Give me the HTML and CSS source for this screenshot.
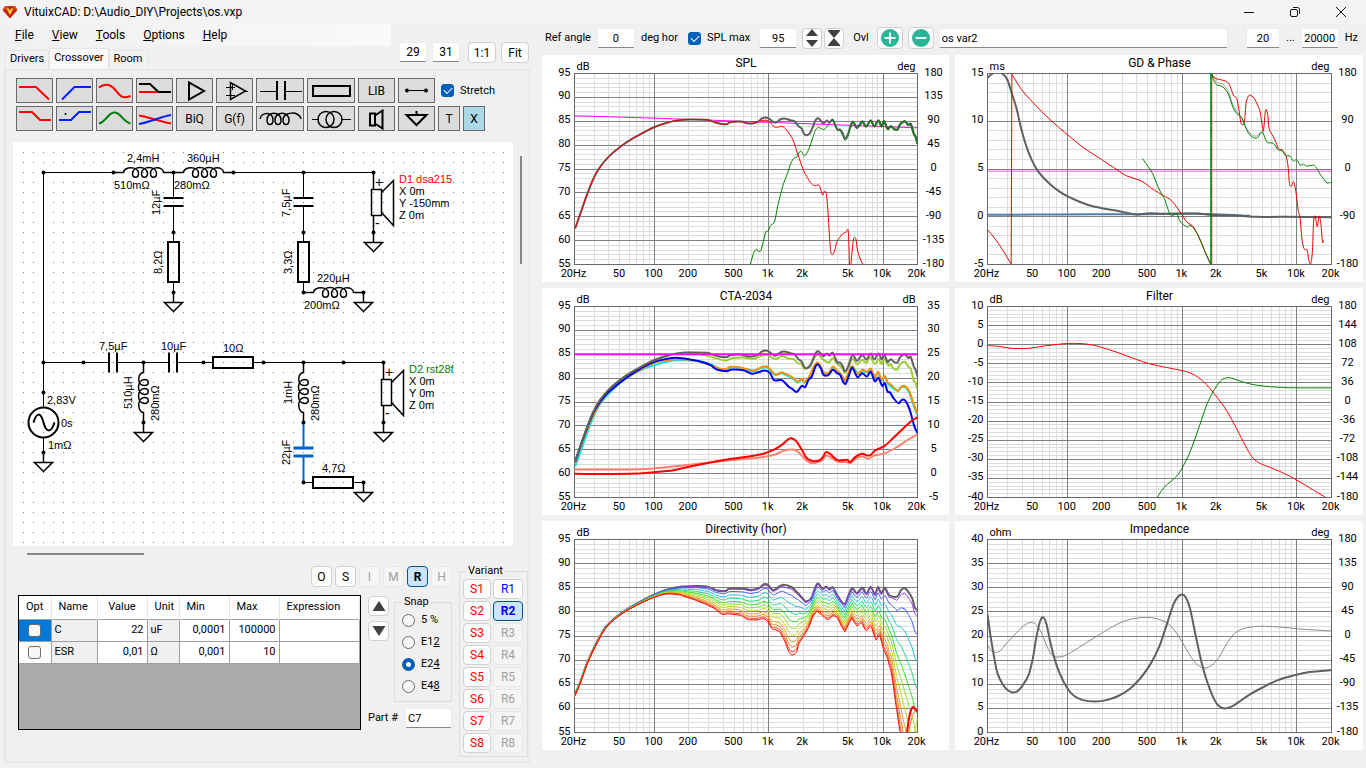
FILE: index.html
```
<!DOCTYPE html>
<html lang="en">
<head>
  <meta charset="UTF-8">
  <meta name="viewport" content="width=device-width, initial-scale=1.0">
  <title>VituixCAD: D:\Audio_DIY\Projects\os.vxp</title>
  <link rel="stylesheet" href="styles.css">
</head>
<body>
  <header class="titlebar">
    <svg class="app-icon" viewBox="0 0 16 14" width="16" height="14">
      <path d="M3 1h10l2.500 4L8 13.500.5 5z" fill="#c81e10"/>
      <path d="M1 5l2.500-4h4L5 4zM10 1h3l2 4-3-1z" fill="#e8462c"/>
      <path d="M4.500 3.500h2.500L8 6l1-2.500h2.500L8 10z" fill="#ffd21e"/>
    </svg>
    <h1>VituixCAD: D:\Audio_DIY\Projects\os.vxp</h1>
    <div class="window-buttons">
      <button aria-label="Minimize"><svg width="12" height="12" viewBox="0 0 12 12"><path d="M1 6.500h10"/></svg></button>
      <button aria-label="Restore"><svg width="12" height="12" viewBox="0 0 12 12"><rect x="1.500" y="3.500" width="7" height="7" rx="1.500"/><path d="M4 1.500h4.500q2 0 2 2V8"/></svg></button>
      <button aria-label="Close"><svg width="12" height="12" viewBox="0 0 12 12"><path d="M1 1l10 10M11 1L1 11"/></svg></button>
    </div>
  </header>

  <div class="app">
    <section class="left">
      <nav class="menu">
        <a href="#"><u>F</u>ile</a>
        <a href="#"><u>V</u>iew</a>
        <a href="#"><u>T</u>ools</a>
        <a href="#"><u>O</u>ptions</a>
        <a href="#"><u>H</u>elp</a>
      </nav>
      <div class="tab-row">
        <div class="tabs" role="tablist">
          <button class="tab" role="tab">Drivers</button>
          <button class="tab active" role="tab" aria-selected="true">Crossover</button>
          <button class="tab" role="tab">Room</button>
        </div>
        <div class="view-size">
          <input class="field center" type="text" value="29" aria-label="Columns">
          <input class="field center" type="text" value="31" aria-label="Rows">
          <button class="btn">1:1</button>
          <button class="btn">Fit</button>
        </div>
      </div>

      <div class="tab-page">
        <div class="parts">
          <div class="part-row">
            <button class="part" aria-label="Low pass"><svg viewBox="0 0 37 25"><path class="red" d="M3 9h17l13 12.500"/></svg></button>
            <button class="part" aria-label="High pass"><svg viewBox="0 0 37 25"><path class="blue" d="M6 21.500L18.500 9H35"/></svg></button>
            <button class="part" aria-label="Shelving"><svg viewBox="0 0 37 25"><path class="red" d="M3 9.500C7 6 13 5 18 10.500S25 22 34.500 18"/></svg></button>
            <button class="part" aria-label="Notch"><svg viewBox="0 0 37 25"><path class="red" d="M3 14h20"/><path d="M3 6h11l8.500 8H35"/></svg></button>
            <button class="part" aria-label="Buffer"><svg viewBox="0 0 37 25"><path d="M13 4.500v17l15-8.500z"/></svg></button>
            <button class="part" aria-label="Opamp"><svg viewBox="0 0 37 25"><path class="medium" d="M14.500 4.500v17l15-8.500z"/><path class="thin" d="M29 13.500h3M10 9.500h9M10 17.500h9M16.500 6v6"/></svg></button>
            <button class="part wide" aria-label="Capacitor"><svg viewBox="0 0 48 25"><path class="thin" d="M4 13.500h17M28 13.500h18"/><path d="M21 3v19M29 3v19"/></svg></button>
            <button class="part wide" aria-label="Resistor"><svg viewBox="0 0 48 25"><rect x="6" y="8" width="37" height="10"/></svg></button>
            <button class="part">LIB</button>
            <button class="part" aria-label="Wire"><svg viewBox="0 0 37 25"><path class="thin" d="M8 12.500h21"/><circle class="dot" cx="9" cy="12.500" r="2"/><circle class="dot" cx="28" cy="12.500" r="2"/></svg></button>
            <label class="check"><input type="checkbox" checked> Stretch</label>
          </div>
          <div class="part-row">
            <button class="part" aria-label="Low shelf"><svg viewBox="0 0 37 25"><path class="red" d="M3 6h13l8 8h11"/></svg></button>
            <button class="part" aria-label="High shelf"><svg viewBox="0 0 37 25"><path class="blue" d="M3 14h12l8-8h12"/><circle class="dot" cx="9.500" cy="8" r="1"/></svg></button>
            <button class="part" aria-label="Peak"><svg viewBox="0 0 37 25"><path class="green" d="M3 17.500C11 15 12 6.500 18.500 6.500S26 15 34.500 17.500"/></svg></button>
            <button class="part" aria-label="Linkwitz"><svg viewBox="0 0 37 25"><path class="red" d="M3 9.500c8 1 24 7 32 8"/><path class="blue" d="M3 18c8-1 24-8 32-9"/></svg></button>
            <button class="part">BiQ</button>
            <button class="part">G(f)</button>
            <button class="part wide" aria-label="Inductor"><svg viewBox="0 0 48 25"><path class="medium" d="M4 13C5 6 17 5 17 14C17 20 11 20 11 14C11 5 25 5 25 14C25 20 19 20 19 14C19 5 33 5 33 14C33 20 27 20 27 14C27 5 44 5 45 13" /></svg></button>
            <button class="part wide" aria-label="Transformer"><svg viewBox="0 0 48 25"><path class="thin" d="M5 13.500h7M34 13.500h10"/><circle class="medium" cx="19" cy="13.500" r="8"/><circle class="medium" cx="27" cy="13.500" r="8"/></svg></button>
            <button class="part" aria-label="Driver"><svg viewBox="0 0 37 25"><path d="M12 7.500h5v12h-5zM17 9.500l7.500-5v18L17 17.500"/></svg></button>
            <button class="part" aria-label="Ground"><svg viewBox="0 0 37 25"><path d="M18.500 5v4M8.500 9h20l-10 10z"/></svg></button>
            <button class="part narrow">T</button>
            <button class="part narrow on">X</button>
          </div>
        </div>

        <div class="schematic">
          <svg class="canvas" viewBox="0 0 500 404">
            <defs>
              <pattern id="dots" width="10" height="10" patternUnits="userSpaceOnUse"><rect width="1" height="1" fill="#808080"/></pattern>
              <g id="coil"><path class="outline" d="M0 0H10C10-6 25-7 25 1C25 6 19 6 19 1C19-7 34-7 34 1C34 6 28 6 28 1C28-7 43-7 43 1C43 6 37 6 37 1C37-7 50-6 50 0H60"/></g>
              <g id="cap"><path d="M0 0V26M0 34V60"/><path class="plate" d="M-10 25.500H10M-10 33.500H10"/></g>
              <g id="res"><path d="M0 0V10M0 50V60"/><path class="plate" d="M-5.500 9.500H5.500V49.500H-5.500z"/></g>
              <g id="gnd"><path class="outline" d="M0 0V10M-9 10H9L0 19z"/></g>
              <g id="speaker"><path class="outline" d="M0 0V17M-2 17H8V43H-2zM8 20L20 8V53L8 40M0 43V60"/></g>
            </defs>
            <rect x="5" y="5" width="492" height="397" fill="url(#dots)"/>
            <g class="wires" transform="translate(.5 .5)">
              <path d="M30 30H100M220 30H360M30 30V250M30 220H70M250 220H370"/>
              <use href="#coil" x="100" y="30"/>
              <use href="#coil" x="160" y="30"/>
              <use href="#cap" x="160" y="30"/>
              <use href="#res" x="160" y="90"/>
              <use href="#gnd" x="160" y="150"/>
              <use href="#cap" x="290" y="30"/>
              <use href="#res" x="290" y="90"/>
              <use href="#coil" x="290" y="150"/>
              <use href="#gnd" x="350" y="150"/>
              <use href="#speaker" x="360" y="30"/>
              <use href="#gnd" x="360" y="90"/>

              <use href="#cap" transform="translate(70 220) rotate(-90)"/>
              <use href="#cap" transform="translate(130 220) rotate(-90)"/>
              <use href="#res" transform="translate(190 220) rotate(-90)"/>
              <use href="#coil" transform="translate(130 280) rotate(-90)"/>
              <use href="#gnd" x="130" y="280"/>
              <use href="#coil" transform="translate(290 280) rotate(-90)"/>
              <use class="selected" href="#cap" x="290" y="280"/>
              <use href="#res" transform="translate(290 340) rotate(-90)"/>
              <use href="#gnd" x="350" y="340"/>
              <use href="#speaker" x="370" y="220"/>
              <use href="#gnd" x="370" y="280"/>

              <path d="M30 250V265M30 295V310"/>
              <circle class="source" cx="30" cy="280" r="15"/>
              <path class="source" d="M20 280C23 270 27 269 30 280S38 290 41 280"/>
              <use href="#gnd" x="30" y="310"/>
            </g>
            <g class="nodes" id="nodes"></g>
            <g class="values">
              <text x="114" y="20">2,4mH</text>
              <text x="174" y="20">360µH</text>
              <text x="101" y="47">510mΩ</text>
              <text x="161" y="47">280mΩ</text>
              <text transform="translate(147 73) rotate(-90)">12µF</text>
              <text transform="translate(149 132) rotate(-90)">8,2Ω</text>
              <text transform="translate(277 75) rotate(-90)">7,5µF</text>
              <text transform="translate(279 132) rotate(-90)">3,3Ω</text>
              <text x="304" y="140">220µH</text>
              <text x="291" y="167">200mΩ</text>
              <text class="sign" x="362" y="45">+</text>
              <text class="sign" x="362" y="86">-</text>
              <text class="red-text" x="386" y="41">D1 dsa215</text>
              <text x="386" y="53">X 0m</text>
              <text x="386" y="65">Y -150mm</text>
              <text x="386" y="77">Z 0m</text>
              <text x="86" y="208">7,5µF</text>
              <text x="148" y="208">10µF</text>
              <text x="210" y="210">10Ω</text>
              <text transform="translate(119 267) rotate(-90)">510µH</text>
              <text transform="translate(146 279) rotate(-90)">280mΩ</text>
              <text x="34" y="262">2,83V</text>
              <text x="48" y="285">0s</text>
              <text x="35" y="307">1mΩ</text>
              <text transform="translate(279 262) rotate(-90)">1mH</text>
              <text transform="translate(306 279) rotate(-90)">280mΩ</text>
              <text transform="translate(277 323) rotate(-90)">22µF</text>
              <text x="309" y="330">4,7Ω</text>
              <text class="sign" x="372" y="235">+</text>
              <text class="sign" x="372" y="276">-</text>
              <text class="green-text" x="396" y="231">D2 rst28f</text>
              <text x="396" y="243">X 0m</text>
              <text x="396" y="255">Y 0m</text>
              <text x="396" y="267">Z 0m</text>
            </g>
          </svg>
          <div class="scroll-y"></div>
          <div class="scroll-x"></div>
        </div>

        <div class="bottom">
          <div class="editor">
            <div class="modes">
              <button class="btn mode">O</button>
              <button class="btn mode">S</button>
              <button class="btn mode" disabled>I</button>
              <button class="btn mode" disabled>M</button>
              <button class="btn mode pressed">R</button>
              <button class="btn mode" disabled>H</button>
            </div>
            <div class="editor-row">
              <div class="grid-box">
                <table class="params">
                  <colgroup><col class="c-opt"><col class="c-name"><col class="c-value"><col class="c-unit"><col class="c-min"><col class="c-max"><col></colgroup>
                  <thead>
                    <tr><th>Opt</th><th>Name</th><th class="mid">Value</th><th class="mid">Unit</th><th>Min</th><th>Max</th><th>Expression</th></tr>
                  </thead>
                  <tbody>
                    <tr><td class="opt current"><input type="checkbox" aria-label="Optimize C"></td><td class="ro">C</td><td class="num">22</td><td class="ro">uF</td><td class="num">0,0001</td><td class="num">100000</td><td></td></tr>
                    <tr><td class="opt"><input type="checkbox" aria-label="Optimize ESR"></td><td class="ro">ESR</td><td class="num">0,01</td><td class="ro">Ω</td><td class="num">0,001</td><td class="num">10</td><td></td></tr>
                  </tbody>
                </table>
              </div>
              <div class="side">
                <div class="side-top">
                  <div class="arrows">
                    <button class="btn arrow" aria-label="Up"><svg width="14" height="12" viewBox="0 0 14 12"><path d="M7 1l6.500 10H.5z"/></svg></button>
                    <button class="btn arrow" aria-label="Down"><svg width="14" height="12" viewBox="0 0 14 12"><path d="M7 11L.5 1h13z"/></svg></button>
                  </div>
                  <fieldset class="snap">
                    <legend>Snap</legend>
                    <label><input type="radio" name="snap"> 5 %</label>
                    <label><input type="radio" name="snap"> <span>E1<u>2</u></span></label>
                    <label><input type="radio" name="snap" checked> <span>E2<u>4</u></span></label>
                    <label><input type="radio" name="snap"> <span>E4<u>8</u></span></label>
                  </fieldset>
                </div>
                <label class="part-no">Part # <input class="field" type="text" value="C7"></label>
              </div>
            </div>
          </div>
          <fieldset class="variant">
            <legend>Variant</legend>
            <button class="btn save">S1</button><button class="btn recall">R1</button>
            <button class="btn save">S2</button><button class="btn recall pressed">R2</button>
            <button class="btn save">S3</button><button class="btn recall" disabled>R3</button>
            <button class="btn save">S4</button><button class="btn recall" disabled>R4</button>
            <button class="btn save">S5</button><button class="btn recall" disabled>R5</button>
            <button class="btn save">S6</button><button class="btn recall" disabled>R6</button>
            <button class="btn save">S7</button><button class="btn recall" disabled>R7</button>
            <button class="btn save">S8</button><button class="btn recall" disabled>R8</button>
          </fieldset>
        </div>
      </div>
    </section>

    <main class="right">
      <div class="chart-bar">
        <label class="ref">Ref angle <input class="field center" type="text" value="0"> deg hor</label>
        <label class="check"><input type="checkbox" checked> SPL max</label>
        <input class="field center max" type="text" value="95" aria-label="SPL maximum">
        <div class="zoomers">
          <button class="btn zoomer" aria-label="Expand range"><svg width="16" height="18" viewBox="0 0 16 18"><path d="M8 0l6 7H2zM8 18l-6-7h12z"/></svg></button>
          <button class="btn zoomer" aria-label="Shrink range"><svg width="16" height="18" viewBox="0 0 16 18"><path d="M2 2h12L8 9zM2 16h12L8 9zM2 1h12v1H2zM2 16h12v1H2z"/></svg></button>
        </div>
        <span>Ovl</span>
        <div class="overlay-buttons">
          <button class="btn round" aria-label="Add overlay"><svg width="18" height="18" viewBox="0 0 20 20"><circle cx="10" cy="10" r="10"/><path d="M4 10h12M10 4v12"/></svg></button>
          <button class="btn round" aria-label="Remove overlay"><svg width="18" height="18" viewBox="0 0 20 20"><circle cx="10" cy="10" r="10"/><path d="M4 10h12"/></svg></button>
        </div>
        <input class="field overlay" type="text" value="os var2" aria-label="Overlay name">
        <label class="range"><input class="field center low" type="text" value="20" aria-label="From frequency"> ... <input class="field center" type="text" value="20000" aria-label="To frequency"> Hz</label>
      </div>
      <div class="charts">
        <svg class="chart" data-chart="spl"></svg>
        <svg class="chart" data-chart="phase"></svg>
        <svg class="chart" data-chart="cta"></svg>
        <svg class="chart" data-chart="filter"></svg>
        <svg class="chart" data-chart="directivity"></svg>
        <svg class="chart" data-chart="impedance"></svg>
      </div>
    </main>
  </div>
  <script src="charts.js"></script>
</body>
</html>
```
FILE: styles.css
```
* {
  box-sizing: border-box;
}

body {
  margin: 0;
  background: #f0f0f0;
  color: #000;
  font: 12px/16px Roboto, "Segoe UI", "Liberation Sans", sans-serif;
}

button,
input {
  font: inherit;
  color: inherit;
  margin: 0;
}

button {
  padding: 0;
}

fieldset {
  margin: 0;
  border: 1px solid #dcdcdc;
  min-width: 0;
}

/* title bar */
.titlebar {
  display: flex;
  align-items: center;
  height: 24px;
  padding-left: 2px;
  background: #f3f3f3;
}

.titlebar h1 {
  margin: 0 auto 0 6px;
  font-size: 12px;
  font-weight: 400;
}

.window-buttons {
  display: flex;
}

.window-buttons button {
  display: flex;
  align-items: center;
  justify-content: center;
  width: 46px;
  height: 22px;
  border: 0;
  background: none;
}

.window-buttons button:last-child {
  margin-right: 2px;
}

.window-buttons path,
.window-buttons rect {
  fill: none;
  stroke: #111;
}

/* main split */
.app {
  display: grid;
  grid-template-columns: 532px minmax(0, 1fr);
  gap: 10px;
  padding: 0 3px 0 0;
}

.menu {
  display: flex;
  align-items: center;
  gap: 18px;
  width: 391px;
  height: 22px;
  padding-left: 15px;
  background: linear-gradient(90deg, #f0f0f0, #f9f9f9);
}

.menu a {
  color: inherit;
  text-decoration: none;
}

.tab-row {
  display: flex;
  justify-content: space-between;
  padding: 0 3px 0 5px;
  height: 23px;
}

.tabs {
  display: flex;
  align-items: flex-end;
  font-size: 11px;
}

.tab {
  height: 19px;
  padding: 0 4px 2px;
  border: 1px solid #e5e5e5;
  border-bottom: 0;
  background: #f3f3f3;
}

.tab.active {
  height: 21px;
  padding-bottom: 3px;
  background: #f9f9f9;
}

.view-size {
  display: flex;
  align-items: flex-start;
  gap: 5px;
  margin-top: -4px;
}

.view-size .field {
  width: 28px;
}

.view-size .btn {
  width: 28px;
  height: 21px;
}

.view-size .btn:first-of-type {
  margin-left: 3px;
}

.field {
  height: 20px;
  padding: 0 2px;
  border: 1px solid #ececec;
  border-bottom-color: #868686;
  border-radius: 2px;
  background: #fff;
}

.center {
  text-align: center;
}

.btn {
  border: 1px solid #d0d0d0;
  border-radius: 4px;
  background: #fdfdfd;
}

.btn:disabled {
  border-color: #e8e8e8;
  background: #f5f5f5;
  color: #a0a0a0;
}

.btn.pressed {
  border-color: #005499;
  background: #cce4f7;
  font-weight: 700;
}

.tab-page {
  display: flex;
  flex-direction: column;
  margin: 0 2px 0 4px;
  padding: 8px 1px 5px 8px;
  border: 1px solid #e5e5e5;
  border-left-width: 2px;
}

/* part palette */
.parts {
  display: flex;
  flex-direction: column;
  gap: 3px;
  padding-left: 2px;
}

.part-row {
  display: flex;
  gap: 3px;
}

.part {
  display: flex;
  align-items: center;
  justify-content: center;
  width: 37px;
  height: 25px;
  border: 1px solid #696969;
  background: #dcdcdc;
}

.part.wide {
  width: 48px;
}

.part.narrow {
  width: 22px;
}

.part.on {
  background: #add8e6;
}

.part svg {
  flex: none;
  width: 37px;
  height: 25px;
  fill: none;
  stroke: #000;
  stroke-width: 2;
}

.part.wide svg {
  width: 48px;
}

.part .red {
  stroke: #f00;
}

.part .blue {
  stroke: #0020ff;
}

.part .green {
  stroke: #008000;
}

.part .thin {
  stroke-width: 1;
}

.part .medium {
  stroke-width: 1.5;
}

.part .dot {
  fill: #000;
  stroke: none;
}

.check {
  display: flex;
  align-items: center;
  gap: 6px;
}

.part-row .check {
  margin-left: 3px;
  font-size: 11px;
}

input[type="checkbox"],
input[type="radio"] {
  appearance: none;
  flex: none;
  width: 13px;
  height: 13px;
  border: 1px solid #6b6b6b;
  border-radius: 3px;
  background: #f7f7f7;
}

input[type="checkbox"]:checked {
  border-color: #005fb8;
  background: #005fb8;
}

input[type="checkbox"]:checked::before {
  content: "";
  display: block;
  width: 7px;
  height: 4px;
  margin: 2px;
  border: solid #fff;
  border-width: 0 0 1px 1px;
  transform: rotate(-45deg);
}

input[type="radio"] {
  border-radius: 50%;
}

input[type="radio"]:checked {
  border: 4px solid #005fb8;
  background: #fff;
}

/* schematic */
.schematic {
  display: grid;
  grid-template-columns: 500px 2px;
  column-gap: 7px;
  row-gap: 7px;
  margin: 11px 0 0 -1px;
}

.canvas {
  display: block;
  width: 500px;
  background: #fff;
}

.scroll-y {
  height: 108px;
  margin-top: 14px;
  background: #868686;
}

.scroll-x {
  width: 117px;
  height: 2px;
  margin-left: 14px;
  background: #868686;
}

.wires {
  fill: none;
  stroke: #000;
  stroke-width: 1;
}

.plate {
  stroke-width: var(--plate, 2px);
}

.outline,
.source {
  stroke-width: 1.5px;
}

.source {
  stroke-width: 2px;
}

.selected {
  --plate: 3px;
  stroke: #0064c8;
  stroke-width: 2px;
}

.nodes {
  fill: #000;
}

.values {
  font: 11px "Liberation Sans", Arial, sans-serif;
}

.sign {
  font-size: 14px;
}

.red-text {
  fill: #f00;
}

.green-text {
  fill: #008000;
}

/* bottom area */
.bottom {
  display: flex;
  justify-content: space-between;
  margin-top: 8px;
  padding-left: 4px;
  font-size: 11px;
}

.modes {
  display: flex;
  justify-content: flex-end;
  gap: 3px;
}

.mode {
  width: 21px;
  height: 21px;
  font-size: 12px;
}

.editor {
  width: 434px;
  padding-top: 3px;
}

.editor-row {
  display: flex;
  justify-content: space-between;
  margin-top: 8px;
}

.grid-box {
  width: 343px;
  height: 135px;
  border: 1px solid #000;
  background: #ababab;
}

.params {
  width: 100%;
  table-layout: fixed;
  border-collapse: collapse;
}

.c-opt { width: 32px; }
.c-name { width: 46px; }
.c-value { width: 50px; }
.c-unit { width: 32px; }
.c-min { width: 50px; }
.c-max { width: 50px; }

.params th {
  height: 23px;
  padding: 0 7px;
  border-right: 1px solid #e5e5e5;
  background: #fff;
  font-weight: 400;
  text-align: left;
  white-space: nowrap;
}

.params th.mid {
  text-align: center;
}

.params td {
  height: 22px;
  padding: 0 3px;
  border: 1px solid #a0a0a0;
  background: #fff;
}

.params td:first-child {
  border-left: 0;
}

.params td.ro {
  background: #f0f0f0;
}

.params .num {
  text-align: right;
}

.params .opt {
  text-align: center;
}

.params .opt input {
  display: block;
  margin: 0 auto;
}

.params td.current {
  background: #0078d7;
}

.side {
  width: 84px;
}

.side-top {
  display: flex;
  justify-content: space-between;
}

.arrows {
  display: flex;
  flex-direction: column;
  gap: 5px;
  padding-top: 1px;
}

.arrow {
  display: flex;
  align-items: center;
  justify-content: center;
  width: 21px;
  height: 20px;
}

.arrow svg,
.zoomer svg {
  fill: #404040;
}

.snap {
  width: 58px;
  height: 107px;
  padding: 0 7px;
}

.snap legend,
.variant legend {
  padding: 0 2px;
}

.snap legend {
  line-height: 14px;
}

.snap label {
  display: flex;
  align-items: center;
  gap: 6px;
  height: 22px;
}

.part-no {
  display: flex;
  align-items: center;
  justify-content: space-between;
  margin-top: 6px;
}

.part-no .field {
  width: 47px;
}

.variant {
  display: grid;
  grid-template-columns: 28px 30px;
  gap: 2px;
  width: 69px;
  padding: 0 3px 3px;
  font-size: 12px;
}

.variant legend {
  margin-left: 3px;
  font-size: 11px;
}

.variant .btn {
  height: 20px;
}

.save {
  color: #f00;
}

.recall {
  color: #00f;
}

/* right side */
.chart-bar {
  display: flex;
  align-items: center;
  height: 31px;
  padding: 0 5px 3px 3px;
  font-size: 11px;
}

.ref,
.range {
  display: flex;
  align-items: center;
  gap: 6px;
}

.ref {
  margin-right: 10px;
}

.ref .field,
.range .field,
.max {
  width: 38px;
}

.range .low {
  width: 34px;
}

.max {
  margin: 0 5px 0 9px;
}

.zoomers {
  display: flex;
  gap: 2px;
  margin-right: 9px;
}

.overlay-buttons {
  display: flex;
  gap: 5px;
  margin: 0 5px 0 8px;
}

.zoomer,
.round {
  display: flex;
  align-items: center;
  justify-content: center;
  width: 20px;
  height: 21px;
}

.round {
  width: 26px;
  height: 22px;
}

.round circle {
  fill: #2bb596;
}

.round path {
  stroke: #fff;
  stroke-width: 2;
}

.overlay {
  flex: 1;
  min-width: 0;
  margin-right: 18px;
}

.charts {
  display: grid;
  grid-template-columns: 407fr 408fr;
  grid-template-rows: 227px 227px 229px;
  gap: 6px;
}

.chart {
  display: block;
  width: 100%;
  height: 100%;
  background: #fff;
}

.chart text {
  font-size: 11px;
}

.chart .title {
  font-size: 12px;
}

.minor {
  stroke: #dcdcdc;
}

.major {
  stroke: #808080;
}

.frame {
  fill: none;
  stroke: #696969;
}

.trace {
  fill: none;
  stroke-linejoin: round;
}
```
FILE: charts.js
```
const NS = 'http://www.w3.org/2000/svg';

// schematic connection points
const nodes = [
  [30, 30], [100, 30], [160, 30], [220, 30], [290, 30], [360, 30],
  [160, 90], [160, 150], [290, 90], [290, 150], [350, 150], [360, 90],
  [30, 220], [70, 220], [130, 220], [190, 220], [250, 220], [290, 220], [330, 220], [370, 220],
  [30, 250], [30, 310], [130, 280], [290, 280], [290, 340], [350, 340], [370, 280]
];

function add(parent, name, attrs, text) {
  const el = document.createElementNS(NS, name);
  for (const key in attrs) el.setAttribute(key, attrs[key]);
  if (text !== undefined) el.textContent = text;
  parent.appendChild(el);
  return el;
}

nodes.forEach(([x, y]) => {
  add(document.getElementById('nodes'), 'circle', { cx: x + 0.5, cy: y + 0.5, r: 2 });
});

// shared low end and treble ripple of the on-axis response
const low = '105,535 120,492 140,435 160,385 180,350 205,320 230,298 260,276 290,258 340,232 380,218 410,211 450,208 ';
const mid = '500,209 520,215 540,221 560,222 570,216 600,214 620,219 640,219 655,214 ';
const treble = ' 930,232 938,215 950,233 960,222 967,214 978,229 992,211 1002,229 1015,211 1024,229 1032,213 1042,236 1052,228 1062,237 1072,238 1080,222 1094,213 1104,224 1112,222 1120,248 1127,262 1132,281';
const total = low + mid + '665,205 678,202 690,208 705,218 720,208 732,205 750,210 762,213 775,228 785,236 792,252 800,255 810,248 818,230 826,210 834,204 842,212 850,219 860,211 868,217 877,208 884,222 892,238 900,238 908,250 914,265 922,255' + treble;

const onAxis = '65,530 75,495 90,430 108,370 125,325 145,295 170,268 195,246 215,230 240,214 270,205 300,203 320,206 335,216 352,218 360,211 385,211 400,215 415,210 425,198 432,199 440,213 445,215 460,200 478,207 490,225 500,243 505,250 515,240 522,210 528,196 537,212 543,205 550,213 556,207 565,232 578,258 586,230 593,210 602,225 612,208 620,226 628,206 636,228 642,206 648,225 655,208 663,230 678,235 686,215 693,210 700,222 707,240 712,268 717,275';
const offAxis = '65,534 75,498 90,433 108,373 125,328 145,298 170,272 195,252 215,238 240,227 265,230 290,243 315,258 330,270 345,288 360,287 380,291 395,304 410,305 425,301 433,310 440,330 455,340 465,370 472,398 478,410 486,403 492,375 500,355 510,328 518,295 526,278 535,290 543,302 550,302 556,292 565,300 572,322 579,340 586,318 592,300 602,322 610,313 620,337 628,325 638,365 645,350 652,390 660,420 668,470 676,560 684,642 692,720 702,800 717,900';

const parse = str => str.trim().split(/\s+/).map(p => p.split(',').map(Number));

function valueAt(points, x) {
  for (let i = 1; i < points.length; i++) {
    const [x0, y0] = points[i - 1];
    const [x1, y1] = points[i];
    if (x <= x1) return y0 + (y1 - y0) * (x - x0) / (x1 - x0);
  }
  return points[points.length - 1][1];
}

function blend(weight) {
  const top = parse(onAxis);
  const bottom = parse(offAxis);
  const xs = [...new Set([...top, ...bottom].map(p => p[0]))].sort((a, b) => a - b);
  return xs.map(x => `${x},${(valueAt(top, x) * (1 - weight) + valueAt(bottom, x) * weight).toFixed(1)}`).join(' ');
}

const angles = [
  [1, '#ff0000'], [0.95, '#f04810'], [0.88, '#e88018'], [0.8, '#dca020'], [0.7, '#c0d420'],
  [0.6, '#90e020'], [0.5, '#30e020'], [0.38, '#20d880'], [0.25, '#20c0d8'], [0.12, '#4060f0'], [0.03, '#9038f0']
].reverse();

// box = [left, top, width, height] of the plot area in trace units
const charts = {
  spl: {
    title: 'SPL', left: 'dB', right: 'deg',
    l: [95, 55, -5], r: [180, -180, -45], box: [103, 70, 1029, 573],
    traces: [
      ['#ff00ff', 1, '103,197 400,206 1132,233'],
      ['#606060', 2, total],
      ['#f00000', 1, low + mid + '665,212 678,210 690,216 702,230 715,231 725,228 740,240 758,268 772,310 790,360 805,388 815,402 825,407 835,404 840,412 847,435 852,424 858,430 863,480 868,560 872,605 877,613 884,600 890,575 900,560 908,550 918,546 922,538 925,550 928,650 | 932,650 936,600 940,567 944,562 948,570 952,600 960,625 968,643'],
      ['#008000', 1, '630,643 640,610 648,598 660,604 668,580 677,545 684,543 692,525 703,515 712,470 722,430 730,400 742,370 750,345 760,325 770,320 778,305 784,304 790,315 797,314 808,292 818,262 826,240 835,232 850,238 860,230 870,215 877,208 884,224 892,240 900,242 908,256 915,270 924,258' + treble],
      ['#267326', 2, treble]
    ]
  },
  phase: {
    title: 'GD & Phase', left: 'ms', right: 'deg',
    l: [15, -5, -5], r: [180, -180, -90], box: [113, 70, 1031, 573],
    traces: [
      ['#ff50ff', 1, '113,363 1144,363'],
      ['#4682b4', 2, '113,494 330,493 560,492 740,491 900,497'],
      ['#606060', 2, '113,83 125,72 140,66 157,70 172,88 186,130 200,175 214,235 230,290 246,330 262,360 280,382 304,405 330,425 352,438 380,451 420,466 460,475 500,482 540,490 560,493 600,489 640,491 680,490 740,490 790,495 860,496 920,500 1000,500 1144,501'],
      ['#a0a0a0', 1, '785,72 792,84 800,97 815,100 828,112 838,132 848,162 860,184 875,203 888,232 900,249 915,258 928,252 938,246'],
      ['#e80000', 1, '113,538 140,572 160,602 184,642 | 184,642 186,72 | 186,72 215,118 250,158 300,208 352,253 400,292 455,328 500,358 530,377 575,393 610,418 640,436 665,452 690,485 710,515 730,530 750,570 781,642 | 785,642 785,70 | 785,72 795,84 808,88 822,91 832,96 840,108 850,135 860,145 866,175 872,215 877,224 883,215 888,160 894,140 900,135 912,144 922,164 930,185 936,225 940,242 945,190 948,178 953,195 957,235 965,252 975,270 985,295 1000,305 1008,318 1014,350 1018,400 1024,408 1031,395 1038,430 1044,480 1050,505 1056,570 1063,598 1071,600 1076,630 1082,640 1087,600 1090,520 1095,497 1101,529 1107,498 1112,520 1117,575 1120,570'],
      ['#008000', 1, '577,325 600,357 610,375 620,400 635,432 645,450 655,480 664,497 680,492 690,513 710,530 720,526 735,540 750,567 765,605 782,642 | 782,642 782,70 | 785,70 790,88 800,104 815,108 828,120 838,140 848,170 860,190 875,203 888,235 900,255 915,264 925,260 930,250 938,246 950,275 970,280 985,300 995,297 1005,315 1020,318 1030,333 1040,328 1050,345 1060,342 1070,348 1090,345 1100,355 1110,372 1120,385 1130,398 1144,396']
    ]
  },
  cta: {
    title: 'CTA-2034', left: 'dB', right: 'dB',
    l: [95, 55, -5], r: [35, -5, -5], box: [103, 70, 1029, 573],
    traces: [
      ['#9acd32', 2, low + '460,210 500,217 540,229 560,232 575,225 610,223 640,227 660,219 680,215 700,226 712,226 725,218 745,226 760,228 775,241 785,243 792,257 800,255 810,246 820,228 832,213 842,222 850,230 866,238 877,225 890,240 905,254 914,268 925,252 937,227 950,243 960,235 967,230 978,240 985,228 992,224 1004,243 1015,227 1024,243 1032,227 1045,247 1052,243 1060,256 1072,258 1080,243 1094,236 1104,250 1112,258 1120,290 1127,300 1132,318'],
      ['#00e8f0', 2, '105,550 125,495 150,425 175,370 205,333 240,299 270,278 310,257 340,247 370,238 400,232 430,231 470,233 510,243 540,257 560,260 575,252 610,256 640,265 658,257 678,252 690,261 705,275 725,270 740,277 755,284 772,298 785,290 792,299 800,292 810,277 820,255 832,240 842,252 850,268 865,272 878,253 900,272 914,293 924,272 938,253 955,273 967,263 980,268 992,259 1004,283 1014,268 1024,291 1034,280 1042,300 1062,317 1074,324 1084,312 1095,312 1106,326 1115,350 1124,377 1132,396'],
      ['#ff9000', 2, '105,540 130,468 160,395 190,345 215,318 250,290 290,266 340,240 370,232 410,228 450,230 490,239 520,250 545,258 560,257 570,251 600,253 640,262 660,254 678,249 690,258 705,274 725,267 740,274 755,281 772,295 785,287 792,297 800,290 810,275 820,252 832,237 842,250 850,266 865,270 878,250 890,262 900,270 908,282 914,291 924,270 932,253 938,250 948,270 955,271 967,260 980,266 992,256 1004,281 1014,266 1024,289 1034,278 1042,298 1052,304 1062,315 1074,322 1084,310 1095,309 1106,322 1115,345 1124,372 1132,392'],
      ['#0000f0', 2, '105,535 130,463 160,388 190,343 215,318 250,290 290,263 340,237 380,227 410,224 450,229 480,235 510,245 530,259 560,264 575,259 610,261 635,272 655,267 675,262 690,270 702,291 725,291 745,310 757,318 770,326 785,308 795,312 805,290 815,280 825,252 832,243 842,255 850,275 864,276 878,260 890,270 900,275 908,294 915,303 922,290 932,260 938,255 952,282 966,270 980,280 992,266 1004,294 1015,284 1026,308 1034,300 1042,325 1050,328 1060,345 1075,360 1085,350 1096,353 1108,378 1115,402 1122,428 1132,450'],
      ['#606060', 2, total],
      ['#ff00ff', 2, '103,213 1132,213'],
      ['#ff8070', 2, '103,559 270,559 340,556 430,547 500,539 560,532 620,527 680,520 705,514 730,503 755,499 770,503 785,517 800,533 820,540 845,532 858,517 875,525 892,535 920,537 932,539 945,528 965,520 985,527 1000,518 1035,510 1070,492 1100,472 1132,454'],
      ['#ff0000', 2, '103,572 270,572 340,567 400,561 440,552 500,540 560,529 620,521 670,512 700,500 725,485 745,468 756,466 770,476 785,500 800,525 820,534 840,530 850,519 857,507 870,512 892,531 920,530 930,537 945,522 965,512 980,517 992,515 1005,502 1020,495 1035,487 1060,464 1090,435 1115,413 1132,402']
    ]
  },
  filter: {
    title: 'Filter', left: 'dB', right: 'deg',
    l: [10, -40, -5], r: [180, -180, -36], box: [113, 67, 1031, 573],
    traces: [
      ['#ff0000', 1, '113,184 150,187 180,192 210,193 240,192 280,186 320,181 352,178 390,178 430,183 460,191 500,204 560,226 600,239 650,250 690,258 720,266 745,280 770,302 800,338 830,380 860,434 885,483 905,517 925,535 950,546 985,560 1030,582 1080,612 1127,640'],
      ['#008000', 1, '622,640 640,612 665,590 685,570 700,545 715,515 730,477 750,420 770,362 785,330 800,305 815,287 830,281 845,282 880,294 920,303 980,309 1040,311 1144,311']
    ]
  },
  directivity: {
    title: 'Directivity (hor)', left: 'dB', right: '',
    l: [95, 55, -5], box: [65, 64, 652, 578],
    traces: [
      ['#606060', 2, onAxis],
      ...angles.map(([weight, color]) => [color, 1, blend(weight)]),
      ['#c0d420', 1, '711,642 714,622 717,600'],
      ['#e88018', 1, '700,642 706,600 712,578 717,570'],
      ['#ff0000', 2, '697,642 702,590 708,566 714,575 717,578']
    ]
  },
  impedance: {
    title: 'Impedance', left: 'ohm', right: 'deg',
    l: [40, 0, -5], r: [180, -180, -45], box: [849, 64, 653, 578],
    traces: [
      ['#888888', 1, '849,380 856,397 864,402 873,398 885,375 900,350 915,326 925,315 934,313 942,320 952,345 962,385 972,410 983,416 1000,409 1030,380 1060,350 1090,322 1115,305 1140,298 1160,298 1180,306 1195,320 1208,345 1222,380 1235,415 1248,440 1262,449 1275,440 1287,420 1300,385 1315,350 1330,334 1350,326 1375,324 1410,327 1450,333 1502,338'],
      ['#606060', 2, '849,288 855,355 862,420 868,465 877,495 887,515 897,522 906,518 916,500 927,470 935,420 942,355 949,308 955,297 961,318 968,370 976,420 986,465 1000,508 1013,532 1030,545 1053,549 1075,545 1098,532 1120,510 1140,478 1158,438 1175,385 1190,315 1202,258 1211,235 1218,229 1225,236 1233,268 1244,350 1255,430 1266,490 1280,545 1290,565 1301,570 1313,564 1325,552 1345,530 1370,508 1400,485 1430,471 1460,461 1502,455']
    ]
  }
};

// Catmull-Rom spline through the points
function spline(points) {
  let d = `M${points[0]}`;
  for (let i = 0; i < points.length - 1; i++) {
    const p0 = points[i - 1] || points[i];
    const p1 = points[i];
    const p2 = points[i + 1];
    const p3 = points[i + 2] || p2;
    d += `C${[
      p1[0] + (p2[0] - p0[0]) / 6, p1[1] + (p2[1] - p0[1]) / 6,
      p2[0] - (p3[0] - p1[0]) / 6, p2[1] - (p3[1] - p1[1]) / 6,
      p2[0], p2[1]
    ].map(v => v.toFixed(2))}`;
  }
  return d;
}

function steps([from, to, step]) {
  const list = [];
  for (let v = from; step < 0 ? v >= to : v <= to; v += step) list.push(v);
  return list;
}

function draw(svg) {
  const chart = charts[svg.dataset.chart];
  const { width, height } = svg.getBoundingClientRect();
  const x0 = 32.5;
  const y0 = 18.5;
  const w = Math.round(width - 64);
  const h = Math.round(height - 36);
  const snap = v => Math.floor(v) + 0.5;
  const fx = f => x0 + w * Math.log10(f / 20) / 3;
  svg.innerHTML = '';

  const hline = (y, cls) => add(svg, 'path', { class: cls, d: `M${x0} ${snap(y)}h${w}` });
  const vline = (x, cls) => add(svg, 'path', { class: cls, d: `M${snap(x)} ${y0}v${h}` });
  const label = (x, y, anchor, text, cls = '') => add(svg, 'text', { x, y, class: cls, 'text-anchor': anchor }, text);

  const left = steps(chart.l);
  const rows = (left.length - 1) * 5;
  for (let i = 1; i < rows; i++) if (i % 5) hline(y0 + h * i / rows, 'minor');
  for (let dec = 10; dec < 20000; dec *= 10) {
    for (let n = 2; n < 10; n++) if (n * dec > 20 && n * dec < 20000) vline(fx(n * dec), 'minor');
  }
  for (let i = 5; i < rows; i += 5) hline(y0 + h * i / rows, 'major');
  [100, 1000, 10000].forEach(f => vline(fx(f), 'major'));
  add(svg, 'rect', { class: 'frame', x: x0, y: y0, width: w, height: h });

  const plot = add(svg, 'svg', { x: x0, y: y0, width: w, height: h, viewBox: chart.box.join(' '), preserveAspectRatio: 'none' });
  chart.traces.forEach(([color, size, data]) => {
    const d = data.split('|').map(part => spline(parse(part))).join('');
    add(plot, 'path', { class: 'trace', d, stroke: color, 'stroke-width': size, 'vector-effect': 'non-scaling-stroke' });
  });

  left.forEach((v, i) => label(x0 - 4, Math.round(y0 + h * i / (left.length - 1) + 2), 'end', v));
  if (chart.r) {
    const right = steps(chart.r);
    right.forEach((v, i) => label(x0 + w + 16, Math.round(y0 + h * i / (right.length - 1) + 2), 'middle', v));
  }
  [[20, '20Hz'], [50, '50'], [100, '100'], [200, '200'], [500, '500'], [1000, '1k'], [2000, '2k'], [5000, '5k'], [10000, '10k'], [20000, '20k']]
    .forEach(([f, text]) => label(fx(f) - 1, y0 + h + 12.5, 'middle', text));
  label(x0 + 2, y0 - 3.5, 'start', chart.left);
  label(x0 + w - 2, y0 - 3.5, 'end', chart.right);
  label(x0 + w / 2, y0 - 6.5, 'middle', chart.title, 'title');
}

function drawAll() {
  document.querySelectorAll('.chart').forEach(draw);
}

drawAll();
window.addEventListener('resize', drawAll);
```
